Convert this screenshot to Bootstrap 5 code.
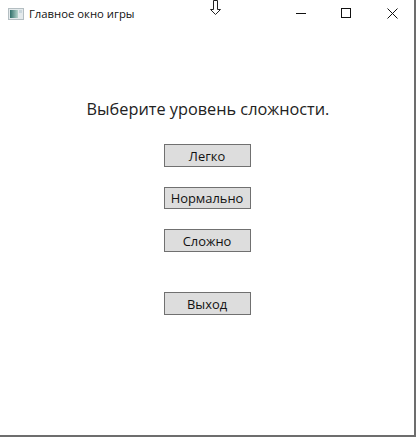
<!DOCTYPE html>
<html lang="ru">
<head>
<meta charset="utf-8">
<title>Главное окно игры</title>
<link rel="stylesheet" href="https://cdn.jsdelivr.net/npm/bootstrap@5.3.0/dist/css/bootstrap.min.css">
<style>
html,body{height:437px;overflow:hidden;background:#fff;}
body{font-family:"Open Sans","Noto Sans","Liberation Sans",sans-serif;color:#111;}
.win-frame{width:416px;height:437px;border-right:2px solid #6d6d6d;border-bottom:2px solid #6d6d6d;position:relative;}
.win-bar{height:30px;padding-left:8px;}
.win-title{font-size:11.3px;margin-left:5px;line-height:16px;margin-top:-3px;color:#111;}
.win-ctrls{margin-right:-1px;align-self:flex-start;}
.win-ctrl{width:46px;height:26px;}
.win-min{margin-left:2px;}
.win-icon{margin-top:-3px;}
.win-body{padding-top:67px;}
.win-head{font-size:16.3px;line-height:24px;margin-bottom:23px;padding-left:2px;color:#222;}
.win-btn{width:87px;height:23px;background:#dddddd;border:1px solid #707070;border-radius:0;padding:1px 0 0;font-size:12.9px;line-height:20px;color:#111;}
.win-btn-short{height:22px;line-height:19px;}
.gap-a{margin-bottom:20px;}
.gap-b{margin-bottom:40px;}
.win-cursor{position:absolute;left:210px;top:0;}
</style>
</head>
<body>
<div class="win-frame">
  <div class="win-bar d-flex align-items-center">
    <svg class="win-icon" width="16" height="14" viewBox="0 0 16 14"><defs><linearGradient id="ig" x1="0" x2="1" y1="0" y2="0"><stop offset="0" stop-color="#2f6f6a"/><stop offset="1" stop-color="#b5d4cc"/></linearGradient></defs><rect x="0.5" y="1.5" width="15" height="11" fill="#e4eaec" stroke="#b4bec2"/><rect x="2" y="3" width="8" height="8" fill="url(#ig)"/><rect x="11" y="3" width="3" height="3" fill="#c9d6dc"/></svg>
    <span class="win-title">Главное окно игры</span>
    <div class="ms-auto d-flex win-ctrls">
      <div class="win-ctrl d-flex align-items-center justify-content-center"><svg class="win-min" width="10" height="10"><path d="M0 5.5H10" stroke="#111"/></svg></div>
      <div class="win-ctrl d-flex align-items-center justify-content-center"><svg width="10" height="10"><rect x="0.5" y="0.5" width="9" height="9" fill="none" stroke="#111"/></svg></div>
      <div class="win-ctrl d-flex align-items-center justify-content-center"><svg width="11" height="11"><path d="M0.5 0.5L10.5 10.5M10.5 0.5L0.5 10.5" stroke="#111"/></svg></div>
    </div>
  </div>
  <div class="win-body d-flex flex-column align-items-center">
    <div class="win-head">Выберите уровень сложности.</div>
    <button class="btn win-btn gap-a">Легко</button>
    <button class="btn win-btn win-btn-short gap-a">Нормально</button>
    <button class="btn win-btn gap-b">Сложно</button>
    <button class="btn win-btn">Выход</button>
  </div>
  <svg class="win-cursor" width="11" height="16" viewBox="0 0 11 16"><path d="M3.5 0.5V9.5H0.5L5.5 14.5L10.5 9.5H7.5V0.5Z" fill="#fff" stroke="#222"/></svg>
</div>
</body>
</html>
